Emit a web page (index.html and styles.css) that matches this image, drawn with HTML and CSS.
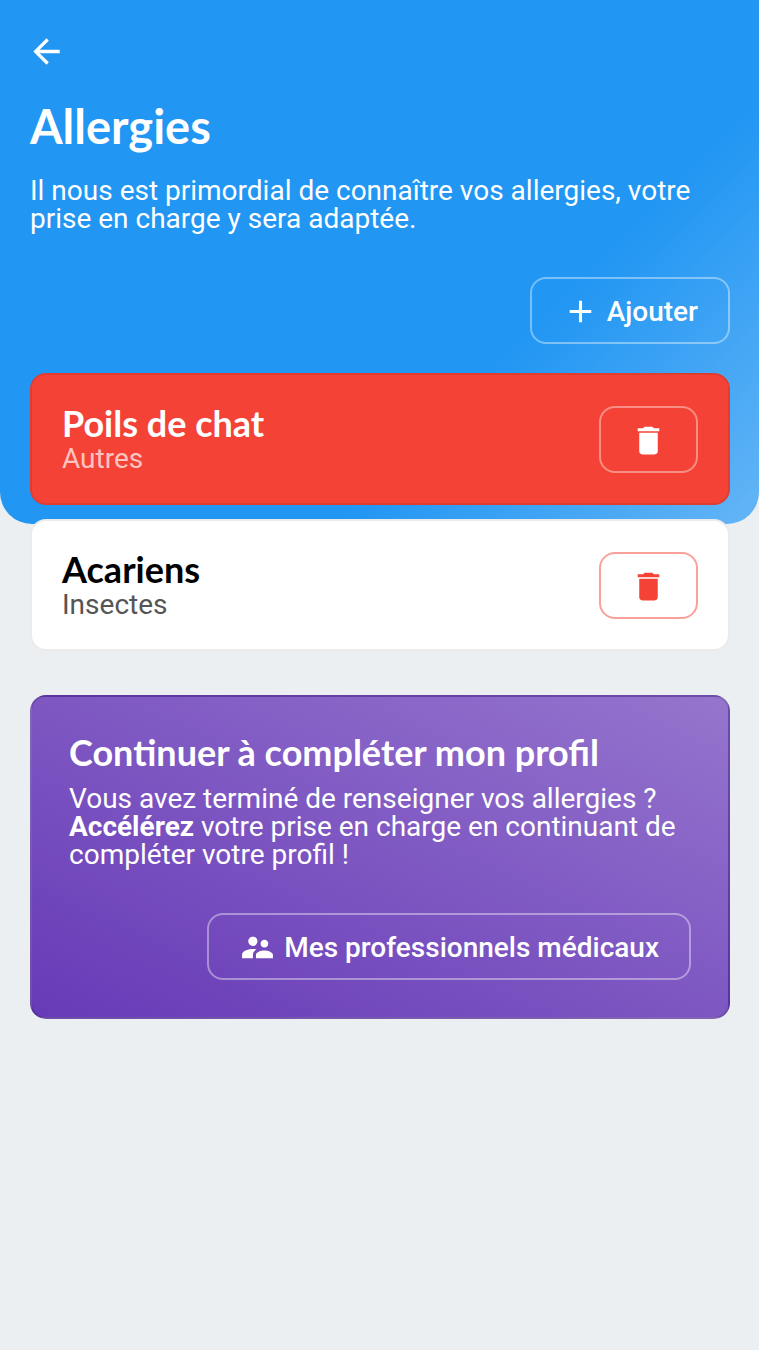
FILE: index.html
```html
<!DOCTYPE html>
<html lang="fr">
<head>
    <meta charset="UTF-8">
    <meta name="viewport" content="width=device-width, initial-scale=1.0">
    <title>Allergies</title>
    <link rel="stylesheet" href="styles.css">
</head>
<body>
    <header class="hero">
        <a href="#" class="back" aria-label="Retour">
            <svg viewBox="2 2 20 20"><path d="M20 11H7.83l5.59-5.59L12 4l-8 8 8 8 1.41-1.41L7.83 13H20v-2z"/></svg>
        </a>
        <h1>Allergies</h1>
        <p>Il nous est primordial de connaître vos allergies, votre prise en charge y sera adaptée.</p>
        <div class="actions">
            <button type="button" class="btn">
                <svg viewBox="0 0 24 24"><path d="M19 13h-6v6h-2v-6H5v-2h6V5h2v6h6v2z"/></svg>
                Ajouter
            </button>
        </div>
    </header>

    <main>
        <ul class="allergies">
            <li class="card danger">
                <div>
                    <h2>Poils de chat</h2>
                    <p>Autres</p>
                </div>
                <button type="button" class="btn" aria-label="Supprimer Poils de chat">
                    <svg viewBox="0 0 24 24"><path d="M6 19c0 1.1.9 2 2 2h8c1.1 0 2-.9 2-2V7H6v12zM19 4h-3.500l-1-1h-5l-1 1H5v2h14V4z"/></svg>
                </button>
            </li>
            <li class="card">
                <div>
                    <h2>Acariens</h2>
                    <p>Insectes</p>
                </div>
                <button type="button" class="btn" aria-label="Supprimer Acariens">
                    <svg viewBox="0 0 24 24"><path d="M6 19c0 1.1.9 2 2 2h8c1.1 0 2-.9 2-2V7H6v12zM19 4h-3.500l-1-1h-5l-1 1H5v2h14V4z"/></svg>
                </button>
            </li>
        </ul>

        <section class="profile">
            <h2>Continuer à compléter mon profil</h2>
            <p>Vous avez terminé de renseigner vos allergies ? <strong>Accélérez</strong> votre prise en charge en continuant de compléter votre profil !</p>
            <div class="actions">
                <button type="button" class="btn">
                    <svg viewBox="0 0 24 24"><path d="M16.500 12c1.380 0 2.490-1.120 2.490-2.500S17.880 7 16.500 7 14 8.120 14 9.500s1.120 2.500 2.500 2.500zM9 11c1.660 0 2.990-1.340 2.990-3S10.660 5 9 5 6 6.340 6 8s1.340 3 3 3zm7.500 3c-1.830 0-5.500.92-5.500 2.750V19h11v-2.250c0-1.830-3.670-2.750-5.500-2.750zM9 13c-2.330 0-7 1.170-7 3.500V19h7v-2.250c0-.85.33-2.340 2.370-3.470C10.500 13.100 9.660 13 9 13z"/></svg>
                    Mes professionnels médicaux
                </button>
            </div>
        </section>
    </main>
</body>
</html>
```
FILE: styles.css
```css
* {
    box-sizing: border-box;
}
body {
    margin: 0;
    min-height: 100vh;
    font-family: Roboto, sans-serif;
    font-size: 28px;
    line-height: 28px;
    background: #ebeff2;
}
h1, h2, p, ul {
    margin: 0;
    padding: 0;
}
h1, h2 {
    font-family: Muli, Lato, sans-serif;
    font-weight: 700;
}
h1 {
    font-size: 47px;
    line-height: 60px;
}
h2 {
    font-size: 36px;
    line-height: 36px;
}
svg {
    display: block;
    fill: currentColor;
}
.hero {
    padding: 35px 29px 180px 30px;
    border-radius: 0 0 32px 32px;
    color: white;
    background: linear-gradient(135deg, #2196f3 67%, #64b5f6);
}
.back {
    display: block;
    width: 33px;
    color: white;
}
.back svg {
    width: 33px;
    height: 33px;
}
.hero h1 {
    margin-top: 28px;
}
.hero p {
    margin-top: 21px;
}
.actions {
    display: flex;
    justify-content: flex-end;
    margin-top: 44px;
}
.btn {
    display: flex;
    align-items: center;
    gap: 8px;
    padding: 14px 30px 12px;
    border: 2px solid rgba(255,255,255,0.4);
    border-radius: 16px;
    background: none;
    color: white;
    font: 500 28px/37px Roboto, sans-serif;
    cursor: pointer;
}
.btn svg {
    width: 37px;
    height: 37px;
}
main {
    padding: 0 29px 30px 30px;
}
.allergies {
    display: grid;
    gap: 14px;
    margin-top: -151px;
    list-style: none;
}
.card {
    display: flex;
    align-items: center;
    justify-content: space-between;
    padding: 30px;
    border: 2px solid rgba(0,0,0,0.08);
    border-radius: 16px;
    background: white;
}
.card p {
    margin-top: 4px;
    color: #555;
}
.card .btn {
    padding: 14px 29px 12px;
    border-color: rgba(244,67,54,0.5);
    color: #f44336;
}
.card.danger {
    color: white;
    background: #f44336;
}
.card.danger p {
    color: rgba(255,255,255,0.7);
}
.card.danger .btn {
    border-color: rgba(255,255,255,0.4);
    color: white;
}
.profile {
    margin-top: 44px;
    padding: 37px;
    border: 2px solid rgba(0,0,0,0.12);
    border-radius: 16px;
    color: white;
    background: linear-gradient(to top right, #673ab7, #7e57c2, #9575cd);
}
.profile p {
    margin-top: 15px;
}
```
